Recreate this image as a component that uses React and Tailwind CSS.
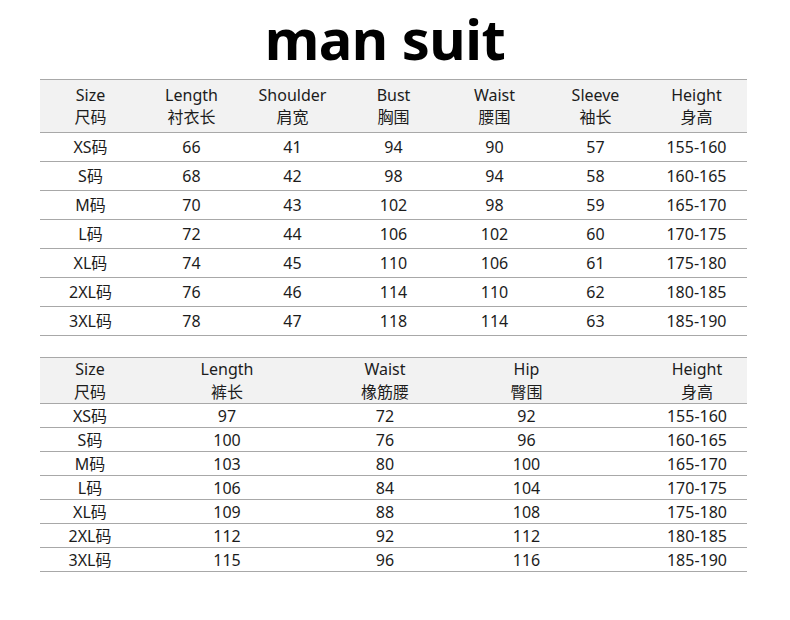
import React from "react";

const topHead = [
  ["Size", "尺码"],
  ["Length", "衬衣长"],
  ["Shoulder", "肩宽"],
  ["Bust", "胸围"],
  ["Waist", "腰围"],
  ["Sleeve", "袖长"],
  ["Height", "身高"],
];

const topRows = [
  ["XS码", "66", "41", "94", "90", "57", "155-160"],
  ["S码", "68", "42", "98", "94", "58", "160-165"],
  ["M码", "70", "43", "102", "98", "59", "165-170"],
  ["L码", "72", "44", "106", "102", "60", "170-175"],
  ["XL码", "74", "45", "110", "106", "61", "175-180"],
  ["2XL码", "76", "46", "114", "110", "62", "180-185"],
  ["3XL码", "78", "47", "118", "114", "63", "185-190"],
];

const pantsHead = [
  ["Size", "尺码"],
  ["Length", "裤长"],
  ["Waist", "橡筋腰"],
  ["Hip", "臀围"],
  ["Height", "身高"],
];

const pantsRows = [
  ["XS码", "97", "72", "92", "155-160"],
  ["S码", "100", "76", "96", "160-165"],
  ["M码", "103", "80", "100", "165-170"],
  ["L码", "106", "84", "104", "170-175"],
  ["XL码", "109", "88", "108", "175-180"],
  ["2XL码", "112", "92", "112", "180-185"],
  ["3XL码", "115", "96", "116", "185-190"],
];

// hip column is wider, text pushed left
const pantsCell = ["", "", "", "pr-[50px]", ""];

export default function App() {
  return (
    <div
      className="w-[790px] h-[620px] bg-white text-[#1c1c1c] overflow-hidden"
      style={{ fontFamily: '"Noto Sans", "Noto Sans CJK SC", sans-serif' }}
    >
      <div className="h-[79px] flex justify-center pr-[20px]">
        <h1 className="text-[56px] leading-[77px] font-bold text-black tracking-[-0.5px]">man suit</h1>
      </div>

      {/* shirt table */}
      <div className="mx-[40px] w-[707px] border-t border-[#a8a8a8] text-[16px]">
        <div className="grid grid-cols-7 bg-[#f2f2f2] border-b border-[#a8a8a8] pt-[4px] pb-[4px] leading-[22px]">
          {topHead.map(([en, zh]) => (
            <div key={en} className="text-center">
              <div>{en}</div>
              <div>{zh}</div>
            </div>
          ))}
        </div>
        {topRows.map((row) => (
          <div key={row[0]} className="grid grid-cols-7 h-[29px] items-center border-b border-[#a8a8a8]">
            {row.map((v, i) => (
              <div key={i} className="text-center">{v}</div>
            ))}
          </div>
        ))}
      </div>

      {/* pants table */}
      <div className="mx-[40px] mt-[21px] w-[707px] border-t border-[#a8a8a8] text-[16px]">
        <div className="grid grid-cols-[100px_174px_142px_191px_100px] bg-[#f2f2f2] border-b border-[#a8a8a8] h-[46px] leading-[23px]">
          {pantsHead.map(([en, zh], i) => (
            <div key={en} className={`text-center ${pantsCell[i]}`}>
              <div>{en}</div>
              <div>{zh}</div>
            </div>
          ))}
        </div>
        {pantsRows.map((row) => (
          <div
            key={row[0]}
            className="grid grid-cols-[100px_174px_142px_191px_100px] h-[24px] items-center border-b border-[#a8a8a8]"
          >
            {row.map((v, i) => (
              <div key={i} className={`text-center ${pantsCell[i]}`}>{v}</div>
            ))}
          </div>
        ))}
      </div>
    </div>
  );
}
